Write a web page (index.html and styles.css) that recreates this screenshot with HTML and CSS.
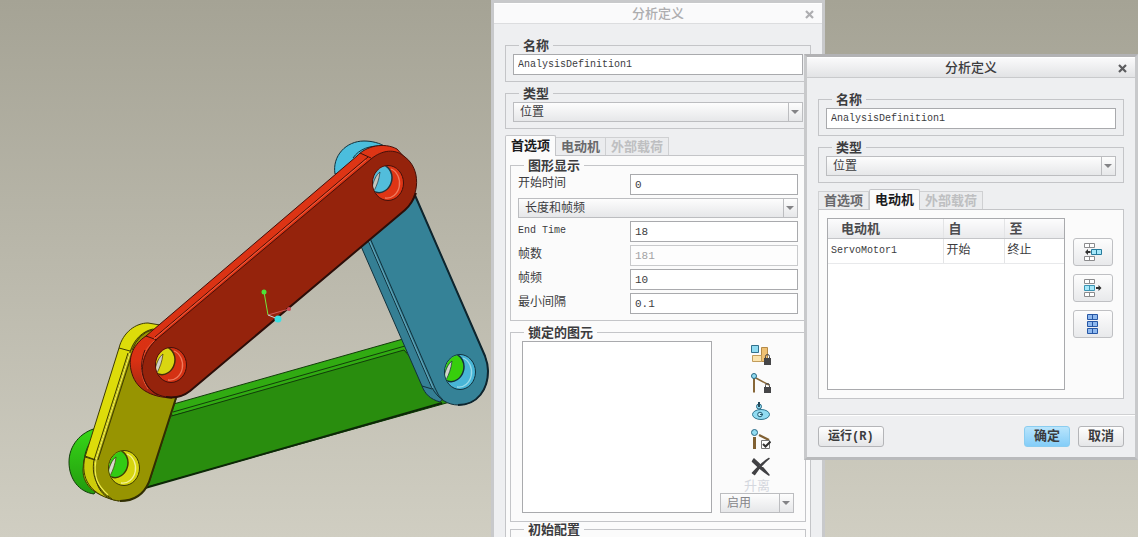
FILE: index.html
```html
<!DOCTYPE html>
<html lang="zh-CN">
<head>
<meta charset="utf-8">
<title>分析定义</title>
<link rel="stylesheet" href="styles.css">
</head>
<body>
<main class="desktop">
  <svg class="model" width="490" height="537" viewBox="0 0 490 537" role="img" aria-label="四连杆机构" stroke-linejoin="round">
    <defs>
      <clipPath id="bore"><ellipse rx="15" ry="17"/></clipPath>
      <linearGradient id="redSide" x1="0" y1="0" x2="0" y2="1"><stop offset="0" stop-color="#de3515"/><stop offset=".85" stop-color="#d93113"/><stop offset="1" stop-color="#9c260f"/></linearGradient>
      <linearGradient id="greenEnd" x1="0" y1="0" x2="0" y2="1"><stop offset="0" stop-color="#37d818"/><stop offset="1" stop-color="#229a0e"/></linearGradient>
    </defs>
    <!-- green link -->
    <g stroke="#123d0a" stroke-width="1">
      <path d="M97 428C80 432 69 446 69 462C69 479 79 492 94 494L110 470Z" fill="url(#greenEnd)"/>
      <path d="M93 438C82 452 80 474 92 490" fill="none"/>
      <path d="M170 405L403 339L410 352L172 416Z" fill="#31ab12"/>
      <path d="M168 417L404 350L450 402L140 489Z" fill="#298d0e"/>
      <path d="M173 412L405 346" fill="none"/>
      <path d="M145 488L442 403" fill="none" stroke="#0c2807" stroke-width="2"/>
    </g>
    <!-- blue link -->
    <g stroke="#12313c" stroke-width="1">
      <path d="M335 174C332 156 346 141 364 141C372 141 380 143 386 147L350 175Z" fill="#4bbedd"/>
      <path d="M353 158C359 149 370 145 384 146" fill="none"/>
      <path d="M360 244L422 386C425 394 430 399 440 402L450 390L385 225Z" fill="#357f94"/>
      <path d="M367 238L431 386C438 400 449 405 458 405C478 405 488 389 488 371Q488 364 485 356L414 193L380 190Z" fill="#358297"/>
      <path d="M370 238L435 388Q438 396 443 400M422 386L432 389" fill="none"/>
      <path d="M369 240L433 388" fill="none" stroke="#69aabd"/>
      <path d="M414 193L485 356Q488 364 488 371C488 389 478 405 458 405" fill="none" stroke="#0e252e" stroke-width="2"/>
    </g>
    <g transform="translate(460 372)">
      <ellipse rx="15.500" ry="17.500" fill="#48b5d6" stroke="#12313c"/>
      <g clip-path="url(#bore)">
        <ellipse cx="-9" cy="-2" rx="12" ry="14" fill="#37ce0c" stroke="#12313c" stroke-width="1.500" transform="rotate(15)"/>
        <path d="M-16 4C-14 -3 -12 -8 -8 -11C-9 -3 -11 2 -14 8Z" fill="#d6d6ce" stroke="#12313c" stroke-width=".7"/>
      </g>
      <path d="M3 -14A13 15 0 0 1 -3 15" fill="none" stroke="#9adbe9" stroke-width="1.300"/>
    </g>
    <!-- yellow link -->
    <g stroke="#3d3b04" stroke-width="1">
      <path d="M119 348C123 332 136 323 148 323L160 325L165 350L130 470L120 500C96 497 83 486 83 470Q83 463 85 457Z" fill="#dddc0a"/>
      <path d="M85 457C80 478 90 496 119 501L122 480L95 460Z" fill="#cdcb0b"/>
      <path d="M130 352C134 339 143 331 153 329L180 340Q184 382 176 399L150 480C144 495 133 501 120 501C101 500 92 483 96 460Z" fill="#979401"/>
      <path d="M128 353L94 460C91 477 98 490 112 499M119 348L130 351M85 456L96 460" fill="none"/>
      <path d="M130 353L96 460C93 477 98 486 108 495" fill="none" stroke="#f0ed4e" stroke-width="1.300"/>
      <path d="M132 354L98 460M132 350Q139 333 152 330" fill="none"/>
      <path d="M176 398L149 482C144 494 134 501 120 501" fill="none" stroke="#302e03" stroke-width="2"/>
    </g>
    <g transform="translate(124 468)">
      <ellipse rx="15.500" ry="17.500" fill="#d6d40f" stroke="#3d3b04"/>
      <g clip-path="url(#bore)">
        <ellipse cx="-9" cy="-2" rx="12" ry="14" fill="#32cb14" stroke="#3d3b04" stroke-width="1.500" transform="rotate(15)"/>
        <path d="M-16 4C-14 -3 -12 -8 -8 -11C-9 -3 -11 2 -14 8Z" fill="#d8d8d0" stroke="#3d3b04" stroke-width=".7"/>
      </g>
      <path d="M3 -14A13 15 0 0 1 -3 15" fill="none" stroke="#f3f19a" stroke-width="1.300"/>
    </g>
    <!-- red link -->
    <g stroke="#44100a" stroke-width="1">
      <path d="M146 336L357 156C366 146 384 142 397 149L405 158L385 180L175 370L172 398C150 397 135 389 131 370C128 356 134 344 146 336Z" fill="url(#redSide)"/>
      <path d="M157 339L371 159C382 150 395 148 405 157C421 169 420 195 405 210L190 391C176 402 154 398 146 384C138 369 144 351 157 339Z" fill="#95230c"/>
      <path d="M155 337L368 157M146 336L157 340M360 153L371 158" fill="none"/>
      <path d="M154 339L366 160" fill="none" stroke="#ef6040"/>
      <path d="M154 341C138 354 139 376 148 389" fill="none" stroke="#e45a3b"/>
      <path d="M145 350C137 369 144 388 158 395" fill="none"/>
      <path d="M416 193Q412 204 405 210L190 391Q180 399 166 397" fill="none" stroke="#2c0e09" stroke-width="2"/>
    </g>
    <g transform="translate(388 183)">
      <ellipse rx="15.500" ry="17.500" fill="#de3515" stroke="#44100a"/>
      <g clip-path="url(#bore)">
        <ellipse cx="-9" cy="-2" rx="12" ry="14" fill="#52bddb" stroke="#22343c" stroke-width="1.500" transform="rotate(15)"/>
        <path d="M-16 4C-14 -3 -12 -8 -8 -11C-9 -3 -11 2 -14 8Z" fill="#c6c6be" stroke="#22343c" stroke-width=".7"/>
      </g>
      <path d="M3 -14A13 15 0 0 1 -3 15" fill="none" stroke="#ee7b5e" stroke-width="1.300"/>
    </g>
    <g transform="translate(171 365)">
      <ellipse rx="15.500" ry="17.500" fill="#d43113" stroke="#44100a"/>
      <g clip-path="url(#bore)">
        <ellipse cx="-9" cy="-2" rx="12" ry="14" fill="#d9d611" stroke="#44300a" stroke-width="1.500" transform="rotate(15)"/>
        <path d="M-16 4C-14 -3 -12 -8 -8 -11C-9 -3 -11 2 -14 8Z" fill="#d0d0c8" stroke="#44300a" stroke-width=".7"/>
      </g>
      <path d="M3 -14A13 15 0 0 1 -3 15" fill="none" stroke="#ee7b5e" stroke-width="1.300"/>
    </g>
    <!-- coordinate axes -->
    <path d="M264 292L268 315" stroke="#72e83c"/>
    <path d="M268 315L289 309" stroke="#cf5b5b"/>
    <path d="M268 315L278 319" stroke="#c8d8d8"/>
    <circle cx="264" cy="292" r="2.5" fill="#4ce437"/>
    <circle cx="289" cy="309" r="2" fill="#cb4856"/>
    <circle cx="278" cy="319" r="3.5" fill="#3cdfe2"/>
  </svg>

  <section class="dialog dialog-back" aria-labelledby="t1">
    <header class="titlebar"><h2 id="t1">分析定义</h2>
      <button class="close" aria-label="关闭"><svg width="9" height="9" viewBox="0 0 9 9"><path d="M1 1L8 8M8 1L1 8" stroke="currentColor" stroke-width="2.2"/></svg></button>
    </header>
    <div class="body">
      <fieldset class="group"><legend>名称</legend><input class="field" aria-label="名称" value="AnalysisDefinition1"></fieldset>
      <fieldset class="group"><legend>类型</legend><span class="combo"><select aria-label="类型"><option>位置</option></select></span></fieldset>
      <nav class="tabs" role="tablist">
        <button class="tab active" role="tab" aria-selected="true">首选项</button>
        <button class="tab" role="tab">电动机</button>
        <button class="tab" role="tab" disabled>外部载荷</button>
      </nav>
      <div class="panel panel-prefs">
        <fieldset class="group">
          <legend>图形显示</legend>
          <div class="form">
            <label for="start">开始时间</label><input class="field number" id="start" value="0">
            <span class="combo wide"><select aria-label="时间域"><option>长度和帧频</option></select></span>
            <label for="end">End Time</label><input class="field number" id="end" value="18">
            <label for="count">帧数</label><input class="field number" id="count" value="181" disabled>
            <label for="rate">帧频</label><input class="field number" id="rate" value="10">
            <label for="step">最小间隔</label><input class="field number" id="step" value="0.1">
          </div>
        </fieldset>
        <fieldset class="group">
          <legend>锁定的图元</legend>
          <div class="locked">
            <div class="listbox" role="listbox" aria-label="锁定的图元"></div>
            <div class="tools">
              <button class="tool" aria-label="锁定主体"><svg width="20" height="20" viewBox="0 0 20 20"><path d="M10.500 2.500h6v14h-6z" fill="#efc174" stroke="#b48a48"/><path d="M1.500 10.500h9v6h-9z" fill="#fce4ae" stroke="#c29d5c"/><path d="M.5.5h7v7h-7z" fill="#91dcf2" stroke="#32718c"/><path d="M13 13h7v7h-7z" fill="#454547"/><path d="M14.500 13v-1.500a2 2 0 0 1 4 0v1.500" fill="none" stroke="#454547"/></svg></button>
              <button class="tool" aria-label="锁定连接"><svg width="20" height="20" viewBox="0 0 20 20"><path d="M3 4v15.500" stroke="#876738" stroke-width="2"/><path d="M3 4l15 8" stroke="#876738" stroke-width="1.500"/><circle cx="3" cy="3" r="2.500" fill="#91dcf2" stroke="#286783"/><path d="M13 14h7v6h-7z" fill="#454547"/><path d="M14.500 14v-1.500a2 2 0 0 1 4 0v1.500" fill="none" stroke="#454547"/></svg></button>
              <button class="tool" aria-label="凸轮提升"><svg width="20" height="20" viewBox="0 0 20 20"><ellipse cx="10" cy="13.500" rx="8.500" ry="5" fill="#91dcf2" stroke="#2f7792"/><circle cx="9" cy="13.500" r="2.300" fill="#c3effa" stroke="#225a70"/><path d="M9 13.500h3" stroke="#225a70"/><circle cx="8" cy="5.500" r="2.500" fill="#91dcf2" stroke="#286783"/><path d="M8 1v5" stroke="#24495a" stroke-width="2"/></svg></button>
              <button class="tool" aria-label="启用连接"><svg width="20" height="20" viewBox="0 0 20 20"><path d="M3.500 8v12" stroke="#806033" stroke-width="3"/><path d="M8 6l10 5" stroke="#806033" stroke-width="2.200"/><circle cx="3.500" cy="3.500" r="3" fill="#91dcf2" stroke="#286783"/><path d="M10.500 11.500h8v8h-8z" fill="#fff" stroke="#777"/><path d="M12 15l2.500 2.500l5-5" fill="none" stroke="#333" stroke-width="2"/></svg></button>
              <button class="tool" aria-label="删除"><svg width="20" height="20" viewBox="0 0 20 20"><path d="M3 2Q9 7 18 18Q10 13 1.500 4.500ZM18 1.500Q12 5 1.500 16L3.500 17.500Q9 9 18 1.500Z" fill="#414144" stroke="#414144" stroke-width="1.500" stroke-linejoin="round"/></svg></button>
              <label class="lift" for="lift">升离</label>
              <span class="combo"><select id="lift" disabled><option>启用</option></select></span>
            </div>
          </div>
        </fieldset>
        <fieldset class="group group-initial"><legend>初始配置</legend></fieldset>
      </div>
    </div>
  </section>

  <section class="dialog dialog-front" aria-labelledby="t2">
    <header class="titlebar"><h2 id="t2">分析定义</h2>
      <button class="close" aria-label="关闭"><svg width="9" height="9" viewBox="0 0 9 9"><path d="M1 1L8 8M8 1L1 8" stroke="currentColor" stroke-width="2.2"/></svg></button>
    </header>
    <div class="body">
      <fieldset class="group"><legend>名称</legend><input class="field" aria-label="名称" value="AnalysisDefinition1"></fieldset>
      <fieldset class="group"><legend>类型</legend><span class="combo"><select aria-label="类型"><option>位置</option></select></span></fieldset>
      <nav class="tabs" role="tablist">
        <button class="tab" role="tab">首选项</button>
        <button class="tab active" role="tab" aria-selected="true">电动机</button>
        <button class="tab" role="tab" disabled>外部载荷</button>
      </nav>
      <div class="panel panel-motors">
        <div class="grid">
          <table>
            <colgroup><col class="c-name"><col class="c-from"><col></colgroup>
            <thead><tr><th>电动机</th><th>自</th><th>至</th></tr></thead>
            <tbody><tr><td class="latin">ServoMotor1</td><td>开始</td><td>终止</td></tr></tbody>
          </table>
        </div>
        <div class="side">
          <button class="side-btn" aria-label="插入行"><svg width="20" height="20" viewBox="0 0 20 20"><path d="M1.500 1.500h10v4h-10zM6.500 1.500v4M1.500 14.500h10v4h-10zM6.500 14.500v4" fill="#fff" stroke="#8b8b8d"/><path d="M8.500 7.500h10v5h-10zM13.500 7.500v5" fill="#a6e8fa" stroke="#267b9c"/><path d="M2 10l3-3v2h2.500v2h-2.500v2z" fill="#333"/></svg></button>
          <button class="side-btn" aria-label="移除行"><svg width="20" height="20" viewBox="0 0 20 20"><path d="M1.500 1.500h10v4h-10zM6.500 1.500v4M1.500 14.500h10v4h-10zM6.500 14.500v4" fill="#fff" stroke="#8b8b8d"/><path d="M1.500 7.500h10v5h-10zM6.500 7.500v5" fill="#a6e8fa" stroke="#3b94b3"/><path d="M18.500 10l-3-3v2h-2.500v2h2.500v2z" fill="#333"/></svg></button>
          <button class="side-btn" aria-label="全部添加"><svg width="20" height="20" viewBox="0 0 20 20"><path d="M4.500.5h10v5h-10zM9.500.5v5M4.500 7.500h10v5h-10zM9.500 7.500v5M4.500 14.500h10v5h-10zM9.500 14.500v5" fill="#8fb9ef" stroke="#2757a5"/></svg></button>
        </div>
      </div>
    </div>
    <footer class="footer">
      <button class="btn run">运行(R)</button>
      <button class="btn primary">确定</button>
      <button class="btn">取消</button>
    </footer>
  </section>
</main>
</body>
</html>
```
FILE: styles.css
```css
* { box-sizing: border-box; }

body {
  margin: 0;
  color: #3c3c3e;
  font: 12px/16px "Liberation Mono", "Noto Sans CJK SC", monospace;
}

button, input, select { font: inherit; color: inherit; margin: 0; }
button { padding: 0; border: 0; background: none; }
svg { display: block; }

.desktop {
  position: relative;
  height: 100vh;
  overflow: hidden;
  background: linear-gradient(#a5a395, #d0cec2);
}

.model { position: absolute; left: 0; top: 0; }

.dialog {
  position: absolute;
  width: 334px;
  border: 3px solid #c8c9cb;
  background: #eeeff1;
}
.dialog-back { left: 491px; top: 0; }
.dialog-front {
  left: 804px;
  top: 54px;
  border-top-color: #b2b2b4;
  border-bottom-color: #b9babc;
}

.titlebar {
  position: relative;
  height: 21px;
  border-top: 1px solid #fff;
  border-bottom: 1px solid #c9cacc;
  background: linear-gradient(#fafafb, #e2e3e5);
}
.titlebar h2 {
  margin: 0;
  font-size: 13px;
  font-weight: 500;
  line-height: 22px;
  text-align: center;
}
.dialog-back .titlebar { background: #fafafb; color: #adadaf; border-bottom-color: #dcdddf; }
.close { position: absolute; right: 8px; top: 6px; color: #5c5c5f; }
.dialog-back .close { color: #aeaeb1; }

.body { padding: 13px 11px 15px; }

.group {
  min-width: 0;
  margin: 0;
  padding: 1px 7px 6px;
  border: 1px solid #c4c5c8;
}
.group + .group { margin-top: 3px; }
.group legend {
  height: 16px;
  margin-left: 6px;
  padding: 0 4px;
  font-size: 13px;
  font-weight: 700;
  line-height: 20px;
}

.field {
  display: block;
  width: 100%;
  height: 21px;
  padding: 0 4px;
  border: 1px solid #a9aaad;
  border-radius: 0;
  background: #fff;
  font-size: 10px;
}
.number { font-size: 11px; }
.field:disabled { border-color: #c9cacc; background: #fdfdfd; color: #a2a2a4; }

.combo {
  position: relative;
  display: block;
  height: 20px;
  border: 1px solid #bcbdc0;
  background: linear-gradient(#fdfdfd, #e6e7e9);
}
.combo select {
  display: block;
  width: 100%;
  height: 18px;
  padding: 2px 20px 0 6px;
  border: 0;
  background: none;
  appearance: none;
  line-height: 16px;
}
.combo::before {
  content: "";
  position: absolute;
  right: 13px;
  top: 0;
  bottom: 0;
  border-left: 1px solid #bcbdc0;
}
.combo::after {
  content: "";
  position: absolute;
  right: 3px;
  top: 7px;
  border: 4px solid transparent;
  border-top-color: #838386;
  border-bottom: 0;
}
.combo select:disabled { color: #858588; opacity: 1; }

.tabs { display: flex; align-items: flex-end; height: 20px; margin-top: 6px; }
.tab {
  height: 18px;
  padding: 2px 5px 0;
  border: 1px solid #cfd0d2;
  border-bottom: 0;
  background: #ebecee;
  color: #69696c;
  font-size: 13px;
  font-weight: 700;
  line-height: 15px;
}
.tab + .tab { border-left: 0; }
.tab.active {
  z-index: 1;
  height: 21px;
  margin-bottom: -1px;
  border: 1px solid #c4c5c8;
  border-bottom: 0;
  border-radius: 2px 2px 0 0;
  background: #fbfbfb;
  color: #1c1c1e;
  line-height: 18px;
}
.tab:disabled { color: #bebfc1; }

.panel { border: 1px solid #c4c5c8; background: #fbfbfb; }
.panel-prefs { padding: 1px 4px; }

.form {
  display: grid;
  grid-template-columns: 112px 1fr;
  gap: 3px 0;
}
.form label { height: 20px; line-height: 20px; }
.form label[for="end"] { font-size: 10px; }
.form .wide { grid-column: 1 / -1; }

.locked { display: flex; gap: 8px; padding: 0 4px 2px; }
.listbox { flex: 1; border: 1px solid #a9aaad; background: #fff; }
.tools {
  display: flex;
  flex-direction: column;
  align-items: center;
  gap: 8px;
  width: 74px;
  padding-top: 4px;
}
.tool { width: 20px; height: 20px; margin-left: 8px; }
.lift { margin: -8px 0 -10px; height: 18px; line-height: 20px; font-size: 13px; color: #d4d7de; }
.tools .combo { width: 100%; }
.panel-prefs .group-initial { margin-top: -1px; height: 100px; }

.panel-motors { display: flex; gap: 8px; padding: 8px 10px 8px 8px; }
.grid {
  flex: 1;
  height: 172px;
  border: 1px solid #a9aaad;
  background: #fff;
}
table { width: 100%; border-collapse: collapse; table-layout: fixed; }
.c-name { width: 115px; }
.c-from { width: 61px; }
th, td { padding: 0 3px; text-align: left; font-weight: 400; border-right: 1px solid #e3e4e6; }
th {
  height: 19px;
  padding: 4px 3px 0 5px;
  border-bottom: 1px solid #c4c5c8;
  background: linear-gradient(#fcfcfd, #e9eaec);
  color: #4c4c4f;
  font-size: 13px;
  font-weight: 700;
  line-height: 14px;
}
th:first-child { padding-left: 13px; }
td { height: 25px; border-bottom: 1px solid #e8e9eb; }
th:last-child, td:last-child { border-right: 0; }
.latin { font-size: 10px; }

.side { display: flex; flex-direction: column; gap: 8px; padding-top: 20px; }
.side-btn {
  display: grid;
  place-items: center;
  width: 40px;
  height: 28px;
  border: 1px solid #bfc0c3;
  border-radius: 3px;
  background: linear-gradient(#fdfdfd, #e8e9eb);
}

.footer {
  display: flex;
  gap: 8px;
  padding: 11px 11px 10px;
  border-top: 1px solid #cfd0d2;
  box-shadow: inset 0 1px #fff;
}
.btn {
  height: 21px;
  padding: 1px 9px 0;
  border: 1px solid #b4b5b8;
  border-radius: 3px;
  background: linear-gradient(#fefefe, #e5e6e8);
  font-size: 13px;
  font-weight: 700;
  line-height: 18px;
}
.run { margin-right: auto; font-size: 12px; }
.primary { border-color: #8bcdf0; background: linear-gradient(#b9e5fc, #84cdf8); }
```
